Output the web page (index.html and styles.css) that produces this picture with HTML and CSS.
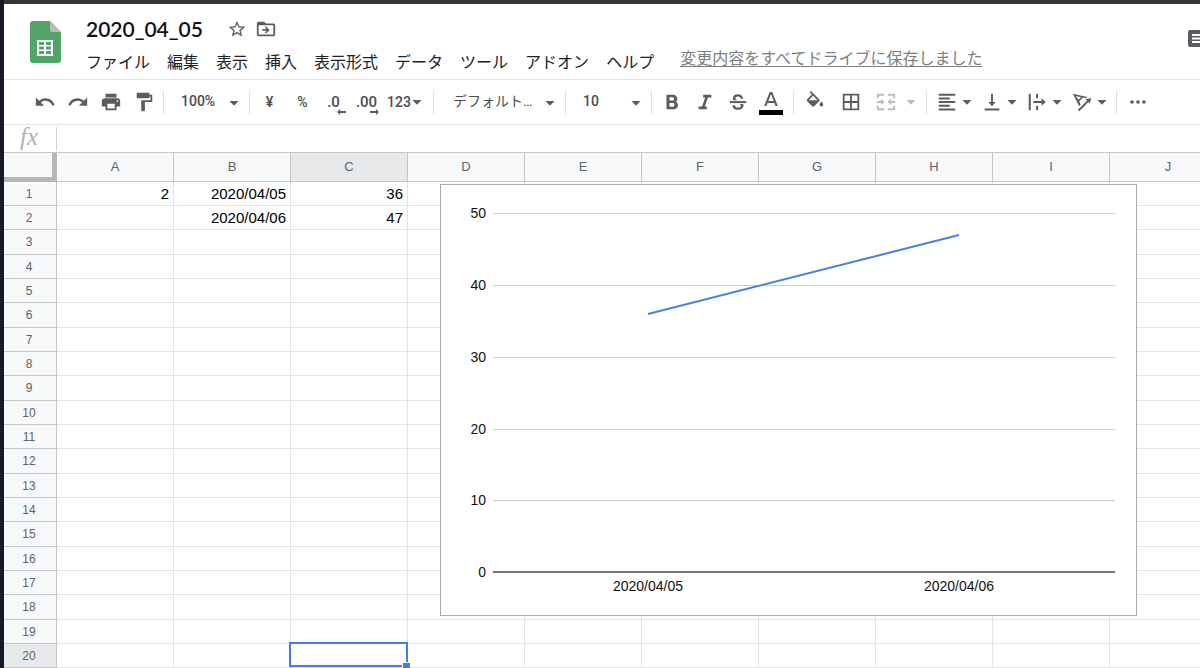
FILE: index.html
```html
<!DOCTYPE html>
<html lang="ja">
<head>
<meta charset="utf-8">
<title>2020_04_05</title>
<link rel="stylesheet" href="styles.css">
</head>
<body>
<svg class="defs" aria-hidden="true">
  <symbol id="caret" viewBox="0 0 12 12"><path d="M1.500 4h9L6 8.800z"/></symbol>
</svg>
<div class="app">
  <header class="header">
    <svg class="logo" viewBox="0 0 31 42" aria-label="スプレッドシート">
      <path fill="#4fa466" d="M3 0h17l11 11v28a3 3 0 0 1-3 3H3a3 3 0 0 1-3-3V3a3 3 0 0 1 3-3z"/>
      <path fill="#b9bdbb" d="M20 0l11 11H22a2 2 0 0 1-2-2z"/>
      <path fill="#fff" fill-rule="evenodd" d="M7 19h16v16H7zM9 21v3h5v-3zM16 21v3h5v-3zM9 25.500v3h5v-3zM16 25.500v3h5v-3zM9 30v3h5v-3zM16 30v3h5v-3z"/>
    </svg>
    <div class="heading">
      <div class="title-row">
        <h1 class="title">2020_04_05</h1>
        <button class="plain" aria-label="スター"><svg class="star" viewBox="0 0 24 24"><path d="M22 9.240l-7.190-.62L12 2 9.190 8.630 2 9.240l5.460 4.730L5.820 21 12 17.270 18.180 21l-1.630-7.030L22 9.240zM12 15.400l-3.760 2.270 1-4.280-3.320-2.880 4.380-.38L12 6.100l1.710 4.040 4.380.38-3.320 2.880 1 4.280L12 15.400z"/></svg></button>
        <button class="plain" aria-label="移動"><svg class="folder" viewBox="0 0 24 24"><path d="M20 6h-8l-2-2H4a2 2 0 0 0-2 2v12a2 2 0 0 0 2 2h16a2 2 0 0 0 2-2V8a2 2 0 0 0-2-2zm0 12H4V8h16zM12 17l4-4-4-4-1.200 1.200 1.900 1.900H8v1.800h4.700l-1.900 1.900z"/></svg></button>
      </div>
      <div class="menu-row">
        <nav class="menu">
          <button class="plain">ファイル</button><button class="plain">編集</button><button class="plain">表示</button><button class="plain">挿入</button><button class="plain">表示形式</button><button class="plain">データ</button><button class="plain">ツール</button><button class="plain">アドオン</button><button class="plain">ヘルプ</button>
        </nav>
        <a class="saved" href="#">変更内容をすべてドライブに保存しました</a>
      </div>
    </div>
    <button class="plain comments" aria-label="コメント"><svg viewBox="0 0 24 24"><path fill-rule="evenodd" d="M4 2h16a2 2 0 0 1 2 2v18l-4-3H4a2 2 0 0 1-2-2V4a2 2 0 0 1 2-2zM6 6v2h12V6zM6 9.500v2h12v-2zM6 13v2h12v-2z"/></svg></button>
  </header>

  <div class="toolbar" role="toolbar">
    <div class="group">
      <button class="tool" aria-label="元に戻す"><svg viewBox="0 0 24 24"><path d="M12.500 8c-2.650 0-5.050.99-6.900 2.600L2 7v9h9l-3.620-3.620c1.390-1.160 3.160-1.880 5.120-1.880 3.540 0 6.550 2.310 7.600 5.500l2.370-.78C21.080 11.030 17.150 8 12.500 8z"/></svg></button>
      <button class="tool" aria-label="やり直し"><svg viewBox="0 0 24 24"><path d="M18.400 10.600C16.550 8.990 14.150 8 11.500 8c-4.650 0-8.580 3.030-9.960 7.220L3.900 16c1.050-3.190 4.050-5.500 7.600-5.500 1.950 0 3.730.72 5.120 1.880L13 16h9V7l-3.600 3.600z"/></svg></button>
      <button class="tool" aria-label="印刷"><svg viewBox="0 0 24 24"><path d="M19 8H5c-1.660 0-3 1.340-3 3v6h4v4h12v-4h4v-6c0-1.660-1.340-3-3-3zm-3 11H8v-5h8v5zm3-7c-.55 0-1-.45-1-1s.45-1 1-1 1 .45 1 1-.45 1-1 1zm-1-9H6v4h12V3z"/></svg></button>
      <button class="tool" aria-label="書式を貼り付け"><svg viewBox="0 0 24 24"><path d="M18 4V3c0-.55-.45-1-1-1H5c-.55 0-1 .45-1 1v4c0 .55.45 1 1 1h12c.55 0 1-.45 1-1V6h1v4H9v11c0 .55.45 1 1 1h2c.55 0 1-.45 1-1v-9h8V4h-3z"/></svg></button>
    </div>
    <div class="group">
      <div class="combo"><select aria-label="ズーム"><option>100%</option></select><svg class="caret"><use href="#caret"/></svg></div>
    </div>
    <div class="group">
      <button class="tool">¥</button>
      <button class="tool">%</button>
      <button class="tool decimals" aria-label="小数点以下の桁数を減らす">.0<svg class="arrow" viewBox="0 0 9 6"><path d="M0 3l3-3v2h6v2H3v2z"/></svg></button>
      <button class="tool decimals" aria-label="小数点以下の桁数を増やす">.00<svg class="arrow" viewBox="0 0 9 6"><path d="M9 3L6 0v2H0v2h6v2z"/></svg></button>
      <button class="tool formats">123<svg class="caret"><use href="#caret"/></svg></button>
    </div>
    <div class="group">
      <div class="combo font"><select aria-label="フォント"><option>デフォルト…</option></select><svg class="caret"><use href="#caret"/></svg></div>
    </div>
    <div class="group">
      <div class="combo"><select aria-label="フォントサイズ"><option>10</option></select><svg class="caret"><use href="#caret"/></svg></div>
    </div>
    <div class="group roomy">
      <button class="tool" aria-label="太字"><svg viewBox="0 0 24 24"><path d="M16.100 11.800c1.100-.8 1.700-1.900 1.700-3.100 0-2.700-2-4.700-4.700-4.700H6v16h7.900c2.600 0 4.600-2.100 4.600-4.600 0-1.700-.9-2.900-2.400-3.600zM9.300 6.800h3.300a1.800 1.800 0 0 1 0 3.600H9.300zm3.900 10.300H9.300v-3.900h3.900a2 2 0 0 1 0 3.900z"/></svg></button>
      <button class="tool" aria-label="斜体"><svg viewBox="0 0 24 24"><path d="M10 4v3h2.210l-3.420 10H5v3h9v-3h-2.210l3.420-10H19V4z"/></svg></button>
      <button class="tool" aria-label="取り消し線"><svg viewBox="0 0 24 24"><path d="M3 11h18v2.200H3z"/><path d="M17.500 8.500C17.500 5.500 15.300 3.500 12 3.500S6.400 5.200 6.400 8c0 .8.200 1.500.6 2h4.500C9.900 9.500 9.200 8.900 9.200 8c0-1.300 1-2.100 2.800-2.100s2.800.9 2.800 2.600zM6 15.500c0 3.200 2.500 5 6.100 5s5.900-1.700 5.900-4.600c0-.6-.1-1.200-.4-1.700h-3.800c.9.400 1.300 1 1.300 1.800 0 1.300-1.100 2.100-3 2.100-2.100 0-3.300-.9-3.300-2.600z"/></svg></button>
      <button class="tool" aria-label="テキストの色"><svg class="text-color" viewBox="0 0 24 28"><path d="M10.700 4L5.200 18h2.300l1.100-3.100h6.800l1.100 3.100h2.300L13.300 4zM9.300 13L12 5.900l2.700 7.100z"/><path fill="#000" d="M0 22h24v5H0z"/></svg></button>
    </div>
    <div class="group">
      <button class="tool wide" aria-label="塗りつぶしの色"><svg viewBox="0 0 24 24"><path d="M16.560 8.940L7.620 0 6.210 1.410l2.380 2.380-5.150 5.150a1.490 1.490 0 0 0 0 2.120l5.500 5.500c.29.29.68.44 1.060.44s.77-.15 1.060-.44l5.500-5.500c.59-.58.59-1.530 0-2.120zM5.210 10L10 5.210 14.790 10H5.210zM19 11.500s-2 2.170-2 3.500a2 2 0 0 0 4 0c0-1.330-2-3.500-2-3.500z"/></svg></button>
      <button class="tool wide" aria-label="枠線"><svg viewBox="0 0 24 24"><path fill-rule="evenodd" d="M3 3h18v18H3zM5 5v6h6V5zM13 5v6h6V5zM5 13v6h6v-6zM13 13v6h6v-6z"/></svg></button>
      <button class="tool split merge" disabled aria-label="セルを結合"><svg viewBox="0 0 24 24"><path d="M2 3h8v2.200H4.200V8H2zM14 3h8v5h-2.200V5.200H14zM2 16h2.200v2.800H10V21H2zM19.800 16H22v5h-8v-2.200h5.800zM2 11h4.500V8.500L10.500 12l-4 3.500V13H2zM22 11h-4.500V8.500l-4 3.500 4 3.500V13H22z"/></svg><svg class="caret"><use href="#caret"/></svg></button>
    </div>
    <div class="group roomy">
      <button class="tool split" aria-label="水平方向の配置"><svg viewBox="0 0 24 24"><path d="M3 3h18v2.200H3zM3 7h12v2.200H3zM3 11h18v2.200H3zM3 15h12v2.200H3zM3 19h18v2.200H3z"/></svg><svg class="caret"><use href="#caret"/></svg></button>
      <button class="tool split" aria-label="垂直方向の配置"><svg viewBox="0 0 24 24"><path d="M16 12h-3V3h-2v9H8l4 4.500zM4 19v2.200h16V19z"/></svg><svg class="caret"><use href="#caret"/></svg></button>
      <button class="tool split" aria-label="テキストの折り返し"><svg viewBox="0 0 24 24"><path d="M3 3h2.200v18H3zM11 3h2.200v5H11zM11 16h2.200v5H11zM8 11h9V8l4.500 4-4.500 4v-3H8z"/></svg><svg class="caret"><use href="#caret"/></svg></button>
      <button class="tool split" aria-label="テキストの回転"><svg viewBox="0 0 24 24"><path d="M2 3l16 3.500-1.500 1.500-3.500-.8-4 4 1.500 3.500L9 16.500zM5.200 5.500l3 4 2.800-2.800z"/><path d="M7.500 20.500l10-10L16 9l6-1.500-1.500 6-1.500-1.500-10 10z"/></svg><svg class="caret"><use href="#caret"/></svg></button>
    </div>
    <div class="group">
      <button class="tool wide" aria-label="その他"><svg viewBox="0 0 24 24"><circle cx="5.500" cy="12" r="2"/><circle cx="12" cy="12" r="2"/><circle cx="18.500" cy="12" r="2"/></svg></button>
    </div>
  </div>

  <div class="formula">
    <label class="fx" for="formula">fx</label>
    <input id="formula" type="text">
  </div>

  <main class="sheet">
    <table class="grid">
      <thead><tr id="columns"><th class="corner"></th></tr></thead>
      <tbody id="rows"></tbody>
    </table>
    <svg class="chart" viewBox="0 0 697 432" role="img" aria-label="折れ線グラフ">
      <g class="guides"><path d="M53 29h622M53 101h622M53 173h622M53 245h622M53 316h622"/></g>
      <path class="axis" d="M53 388h622"/>
      <path class="series" d="M208 130L519 51"/>
      <g class="values">
        <text x="46" y="34">50</text><text x="46" y="106">40</text><text x="46" y="178">30</text><text x="46" y="250">20</text><text x="46" y="321">10</text><text x="46" y="393">0</text>
      </g>
      <g class="dates"><text x="208" y="407">2020/04/05</text><text x="519" y="407">2020/04/06</text></g>
    </svg>
  </main>
</div>
<script src="sheet.js"></script>
</body>
</html>
```
FILE: styles.css
```css
* { box-sizing: border-box; }
body {
  margin: 0;
  background: #151a24;
  font-family: Roboto, "Noto Sans CJK JP", sans-serif;
  color: #202124;
}
.defs { display: none; }
svg { fill: #595c60; flex: none; }
button, select, input { font: inherit; color: inherit; border: 0; background: none; padding: 0; margin: 0; }

.app {
  min-height: 100vh;
  margin-left: 4px;
  background: #fff;
  border-top: 4px solid #35363a;
  overflow: hidden;
}
.header {
  display: flex;
  align-items: flex-start;
  height: 76px;
  padding-left: 26px;
  border-bottom: 1px solid #e2e3e4;
}
.logo { width: 31px; height: 42px; margin-top: 17px; }
.heading { flex: 1; padding: 10px 0 0 25px; }
.title-row { display: flex; align-items: center; gap: 8px; height: 30px; }
.title { margin: 0 16px 0 0; font: 600 21px/28px Lato, sans-serif; color: #111; }
.plain { display: flex; white-space: nowrap; }
.star { width: 20px; height: 20px; }
.folder { width: 22px; height: 22px; }
.menu-row { display: flex; align-items: flex-start; gap: 26px; font-size: 16px; line-height: 24px; }
.menu { display: flex; gap: 17px; padding-top: 5px; font-family: "Noto Sans CJK JP", sans-serif; }
.saved { padding-top: 1px; color: #7c7f80; font-family: "Noto Sans CJK JP", sans-serif; white-space: nowrap; text-underline-offset: 2px; }
.comments { margin: 24px -10px 0 0; }
.comments svg { width: 24px; height: 24px; }

.toolbar {
  display: flex;
  align-items: center;
  height: 45px;
  padding-left: 24px;
  border-bottom: 1px solid #e2e3e4;
  color: #4a4d51;
  font-size: 14px;
  font-weight: 500;
}
.group { display: flex; align-items: center; flex: none; }
.group + .group::before { content: ""; width: 1px; height: 23px; margin: 0 3px; background: #dcdddf; }
.roomy { padding-right: 3px; }
.tool { display: flex; align-items: center; justify-content: center; width: 33px; height: 32px; flex: none; }
.tool svg { width: 22px; height: 22px; }
.tool .caret, .caret { width: 12px; height: 12px; }
.wide { width: 36px; }
.decimals { position: relative; padding-right: 4px; font-size: 15px; }
.tool.decimals .arrow { position: absolute; right: 6px; bottom: 3px; width: 9px; height: 6px; }
.formats { width: 45px; padding-right: 5px; }
.tool .text-color { width: 24px; height: 28px; }
.split { width: 45px; justify-content: flex-start; padding-left: 6px; gap: 3px; }
.merge { width: 54px; gap: 8px; opacity: .4; }
.combo { position: relative; width: 79px; }
.combo select { width: 100%; height: 28px; padding: 0 0 2px 14px; appearance: none; }
.combo .caret { position: absolute; right: 6px; top: 9px; pointer-events: none; }
.font { width: 125px; }
.font select { padding-left: 16px; font-weight: 400; }

.formula { display: flex; align-items: center; height: 28px; border-bottom: 1px solid #c4c6c8; }
.fx { width: 53px; padding: 0 0 4px 16px; border-right: 1px solid #d0d1d2; font: italic 25px/20px "Liberation Serif", serif; color: #b0b2b3; }
.formula input { flex: 1; height: 24px; padding: 0 8px; outline: none; }

.sheet { position: relative; font-family: "Liberation Sans", Arial, sans-serif; }
.grid { table-layout: fixed; width: 1223px; border-collapse: separate; border-spacing: 0; }
.grid th, .grid td { height: 24px; padding: 0; border: 0 solid #e2e3e3; border-width: 0 1px 1px 0; }
.grid th { width: 117px; background: #f8f9fb; border-color: #c4c6c8; color: #5f6368; font-size: 13px; font-weight: 400; line-height: 16px; }
.grid thead th { height: 29px; }
.grid tbody th { padding-right: 2px; font-size: 12px; }
.grid tr:nth-child(3n) td, .grid tr:nth-child(3n) th { height: 25px; }
.grid td { padding-right: 4px; text-align: right; font-size: 15px; line-height: 18px; color: #000; }
.grid .corner { width: 53px; border: 0 solid #b7b7b7; border-width: 0 5px 5px 0; }
.grid .active { background: #e8e9eb; }
.grid .selected { position: relative; }
.selected::before { content: ""; position: absolute; inset: -2px -1px 0 -2px; border: 2px solid #3f7de8; }
.selected::after { content: ""; position: absolute; right: -3px; bottom: -2px; width: 7px; height: 6px; background: #3f7de8; border: 0 solid #fff; border-width: 1px 0 0 1px; }

.chart { position: absolute; left: 436px; top: 31px; width: 697px; height: 432px; background: #fff; outline: 1px solid #a9abad; outline-offset: -1px; }
.chart path { fill: none; }
.guides { stroke: #ccc; shape-rendering: crispEdges; }
.axis { stroke: #555; stroke-width: 2; stroke-opacity: .8; }
.series { stroke: #4680e8; stroke-width: 2; }
.chart text { fill: #111; font-size: 14px; }
.values { text-anchor: end; }
.dates { text-anchor: middle; }
```
FILE: sheet.js
```js
const letters = "ABCDEFGHIJ".split("");
const cells = { A1: "2", B1: "2020/04/05", C1: "36", B2: "2020/04/06", C2: "47" };
const selected = { column: "C", row: 20 };

function add(parent, tag, text, className) {
  const el = document.createElement(tag);
  el.textContent = text || "";
  if (className) el.className = className;
  parent.appendChild(el);
  return el;
}

const columns = document.getElementById("columns");
letters.forEach(l => add(columns, "th", l, l === selected.column ? "active" : ""));

const body = document.getElementById("rows");
for (let r = 1; r <= 20; r++) {
  const row = add(body, "tr");
  add(row, "th", String(r), r === selected.row ? "active" : "");
  letters.forEach(l => {
    const on = l === selected.column && r === selected.row;
    add(row, "td", cells[l + r], on ? "selected" : "");
  });
}
```
